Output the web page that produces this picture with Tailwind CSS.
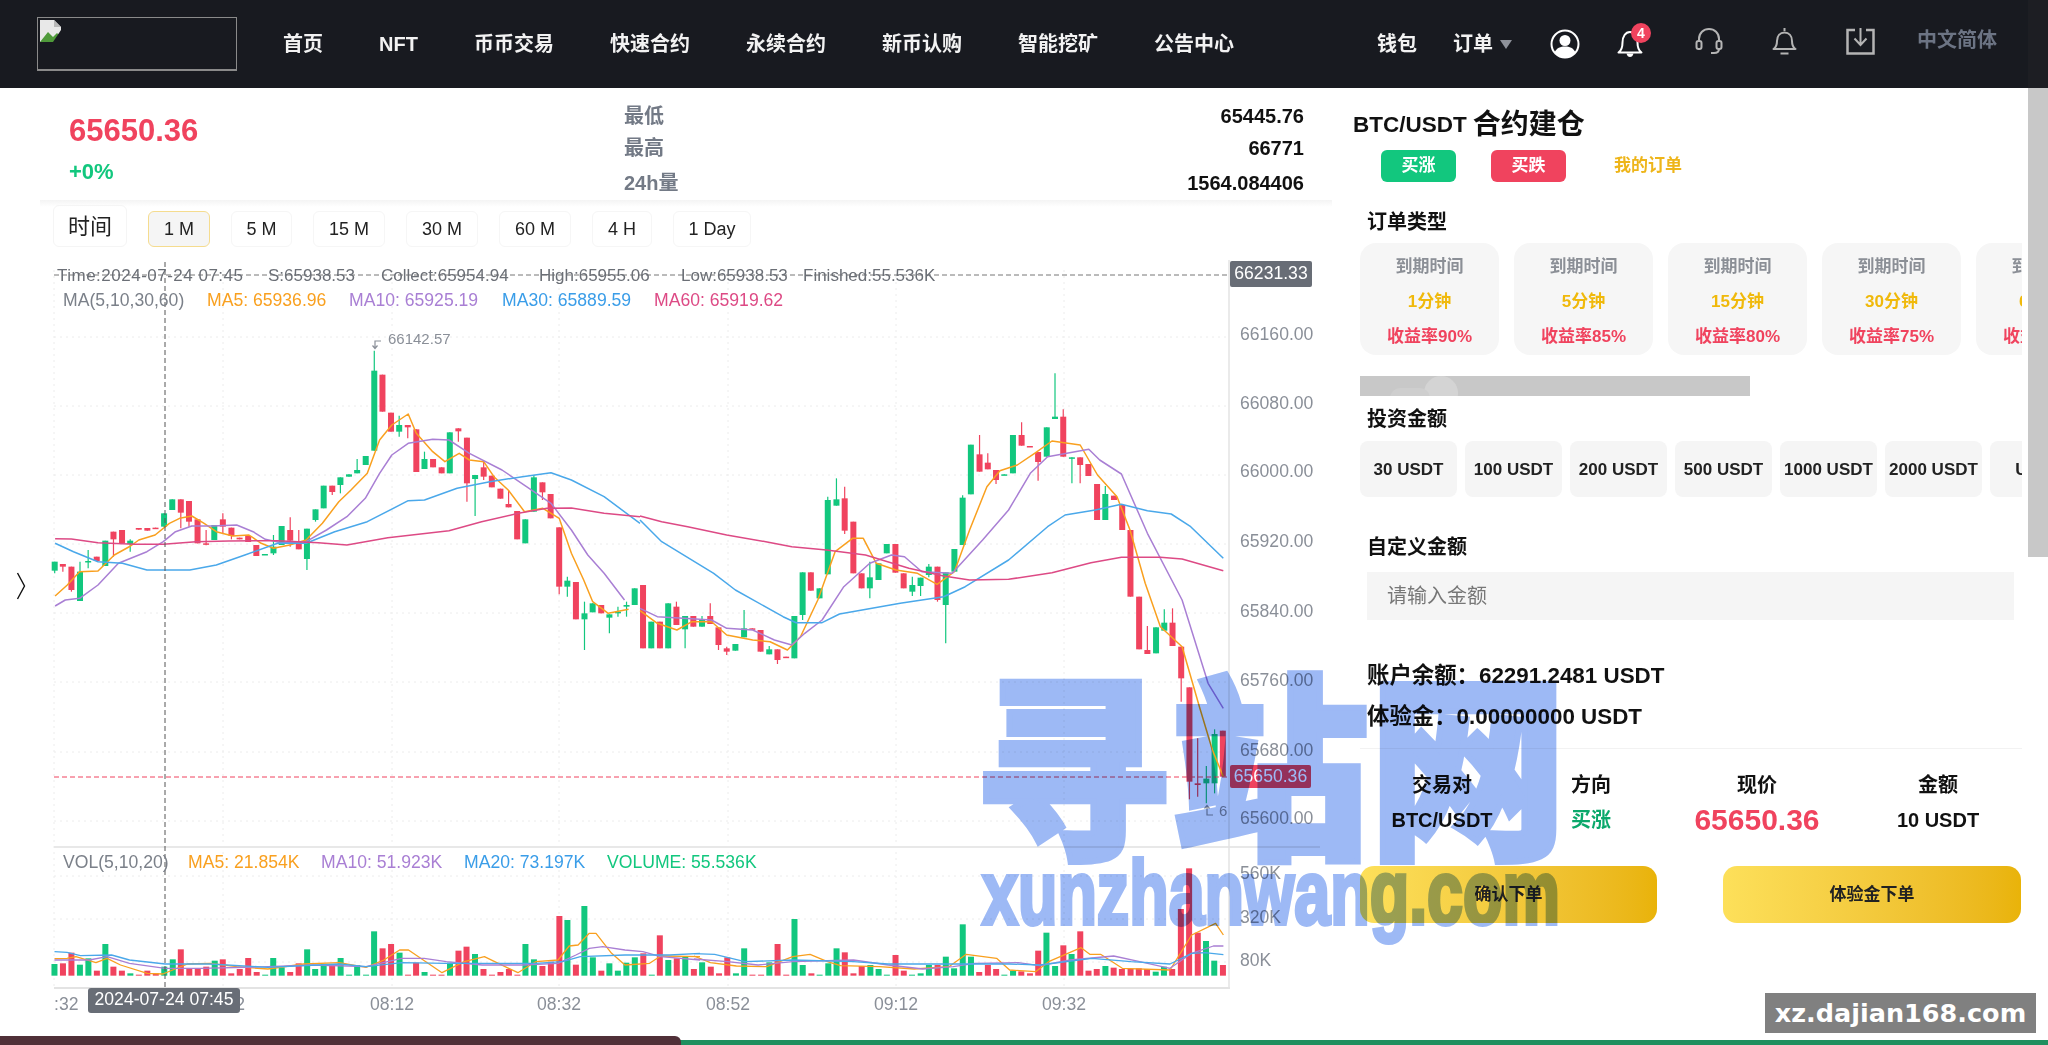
<!DOCTYPE html>
<html lang="zh-CN">
<head>
  <meta charset="UTF-8" />
  <title>BTC/USDT 合约建仓</title>
  <script src="https://cdn.jsdelivr.net/npm/@tailwindcss/browser@4"></script>
</head>
<body class="bg-white font-['Liberation_Sans','Noto_Sans_CJK_SC',sans-serif] text-[#111]">
<div class="relative flex h-[1045px] w-[2048px] overflow-hidden">

  <div class="w-[2028px] shrink-0">
    <!-- header -->
    <header class="flex h-[88px] items-center bg-[#181a20] pl-[37px] pr-[31px] text-[20px] font-bold text-[#f2f2f2]">
      <div class="h-[54px] w-[200px] border border-b-2 border-[#8a8a8a] pl-px pt-px">
        <svg width="23" height="24" viewBox="0 0 23 24">
          <path d="M1 1h14l7 7v15H1z" fill="#e8e8e8"/>
          <path d="M15 1v7h7z" fill="#b8b8b8"/>
          <path d="M1 23l8-10 5 5 4-4 4 4v5z" fill="#4f9a3a"/>
          <path d="M14 23l8-12v12z" fill="#181a20"/>
        </svg>
      </div>
      <nav class="ml-[46px] flex gap-14">
        <span>首页</span><span>NFT</span><span>币币交易</span><span>快速合约</span><span>永续合约</span><span>新币认购</span><span>智能挖矿</span><span>公告中心</span>
      </nav>
      <div class="ml-auto flex items-center">
        <span>钱包</span>
        <span class="ml-9">订单</span>
        <svg class="ml-[7px]" width="12" height="9" viewBox="0 0 12 9"><path d="M0 0h12L6 9z" fill="#8e929a"/></svg>
        <svg class="ml-[38px]" width="30" height="30" viewBox="0 0 30 30">
          <circle cx="15" cy="15" r="13.5" fill="none" stroke="#fff" stroke-width="2"/>
          <circle cx="15" cy="11.5" r="5.5" fill="#fff"/>
          <path d="M4.500 23.500c2-4.500 6-6 10.500-6s8.500 1.500 10.500 6c-2.500 3-6 5-10.500 5s-8-2-10.500-5z" fill="#fff"/>
        </svg>
        <div class="relative ml-[37px] h-[28px] w-[26px]">
          <svg width="26" height="28" viewBox="0 0 26 28">
            <path d="M1.500 22.500c3-2 4-5 4-10 0-6 3-10.500 7.500-10.500s7.500 4.500 7.500 10.500c0 5 1 8 4 10z" fill="none" stroke="#fff" stroke-width="2" stroke-linejoin="round"/>
            <path d="M9.500 23.500h7c-.5 2.500-2 3.500-3.500 3.500s-3-1-3.500-3.500z" fill="#fff"/>
          </svg>
          <span class="absolute -right-[8px] -top-[7px] flex h-5 w-5 items-center justify-center rounded-full bg-[#f0435e] text-[14px] leading-none text-white">4</span>
        </div>
        <svg class="ml-[52px] -translate-y-[3px]" width="28" height="28" viewBox="0 0 28 28" fill="none" stroke="#b4b4b4" stroke-width="2">
          <path d="M4 15V12C4 6 8.500 2 14 2s10 4 10 10v3"/>
          <rect x="1.500" y="14" width="5" height="8" rx="2"/>
          <rect x="21.500" y="14" width="5" height="8" rx="2"/>
          <path d="M24 22c0 3-2 4-5 4h-3"/>
        </svg>
        <svg class="ml-[49px] -translate-y-[3px]" width="25" height="28" viewBox="0 0 25 28" fill="none" stroke="#b4b4b4" stroke-width="2" stroke-linejoin="round">
          <path d="M1.500 22c2.500-1.500 3.500-4 3.500-8 0-5 3-8.500 7.500-8.500S20 9 20 14c0 4 1 6.500 3.500 8z"/>
          <path d="M12.500 1v3M8.500 26.500h8"/>
        </svg>
        <svg class="ml-[49px] -translate-y-[3px]" width="29" height="28" viewBox="0 0 29 28" fill="none" stroke="#b4b4b4" stroke-width="2.500">
          <path d="M9 3H1.500v23.500h26V3H20"/>
          <path d="M14.500 1v16M8.500 11.500l6 6.500 6-6.500" stroke-width="2"/>
        </svg>
        <span class="ml-[42px] -translate-y-[4px] text-[#6c7484]">中文简体</span>
      </div>
    </header>

    <div class="flex">
      <!-- chart side -->
      <section class="w-[1335px] shrink-0">
        <div class="flex h-[112px]">
          <div class="w-[624px] pl-[69px]">
            <div class="mt-[24px] text-[31px] leading-[38px] font-bold text-[#f0435e]">65650.36</div>
            <div class="mt-[8px] text-[22px] leading-7 font-bold text-[#12c77e]">+0%</div>
          </div>
          <div class="w-[680px] pt-[12px] text-[20px] font-bold">
            <div class="flex h-8 items-center justify-between"><span class="text-[#737a86]">最低</span><span>65445.76</span></div>
            <div class="flex h-8 items-center justify-between"><span class="text-[#737a86]">最高</span><span>66771</span></div>
            <div class="mt-[3px] flex h-8 items-center justify-between"><span class="text-[#737a86]">24h量</span><span>1564.084406</span></div>
          </div>
        </div>
        <div class="ml-10 h-[7px] w-[1292px] bg-gradient-to-b from-[#f4f4f4] to-white"></div>
        <div class="relative -mt-[2px] flex h-[45px] items-start pl-[53px] text-[18px] text-[#222]">
          <span class="flex h-[42px] w-[74px] items-center justify-center rounded-md border border-[#f5f5f5] text-[22px]">时间</span>
          <div class="ml-[21px] mt-[6px] flex gap-[21px]">
            <span class="flex h-[36px] w-[62px] items-center justify-center rounded-md border border-[#f5dc8f] bg-[#f5f5f5]">1 M</span>
            <span class="flex h-[36px] w-[61px] items-center justify-center rounded-md border border-[#f6f6f6]">5 M</span>
            <span class="flex h-[36px] w-[72px] items-center justify-center rounded-md border border-[#f6f6f6]">15 M</span>
            <span class="flex h-[36px] w-[72px] items-center justify-center rounded-md border border-[#f6f6f6]">30 M</span>
            <span class="flex h-[36px] w-[72px] items-center justify-center rounded-md border border-[#f6f6f6]">60 M</span>
            <span class="flex h-[36px] w-[60px] items-center justify-center rounded-md border border-[#f6f6f6]">4 H</span>
            <span class="flex h-[36px] w-[78px] items-center justify-center rounded-md border border-[#f6f6f6]">1 Day</span>
          </div>
        </div>
        <svg id="chart" class="block" width="1335" height="795" viewBox="0 250 1335 795"></svg>
      </section>

      <!-- order side -->
      <section class="w-[693px] overflow-hidden pl-[18px] pt-[17px]">
        <div class="flex h-10 items-center font-bold">
          <span class="text-[22.500px]">BTC/USDT</span>
          <span class="ml-[6px] text-[28px]">合约建仓</span>
        </div>
        <div class="ml-[28px] mt-[5px] flex h-8 items-center text-[17px] font-bold">
          <span class="flex h-8 w-[75px] items-center justify-center rounded-md bg-[#12c77e] text-white">买涨</span>
          <span class="ml-[35px] flex h-8 w-[75px] items-center justify-center rounded-md bg-[#f0435e] text-white">买跌</span>
          <span class="ml-[48px] text-[#eeb51a]">我的订单</span>
        </div>
        <div class="ml-[14px] mt-[25px] flex h-7 items-center pt-[2px] text-[20px] font-bold">订单类型</div>
        <div class="ml-[7px] mt-2 flex w-[662px] gap-[15px] overflow-hidden text-center text-[17px] font-bold">
          <div class="flex h-[112px] w-[139px] shrink-0 flex-col justify-center gap-[14px] rounded-2xl bg-[#f6f6f6] pt-[5px] leading-[21px]"><span class="text-[#8b8f96]">到期时间</span><span class="text-[#f0b90b]">1分钟</span><span class="text-[#f0435e]">收益率90%</span></div>
          <div class="flex h-[112px] w-[139px] shrink-0 flex-col justify-center gap-[14px] rounded-2xl bg-[#f6f6f6] pt-[5px] leading-[21px]"><span class="text-[#8b8f96]">到期时间</span><span class="text-[#f0b90b]">5分钟</span><span class="text-[#f0435e]">收益率85%</span></div>
          <div class="flex h-[112px] w-[139px] shrink-0 flex-col justify-center gap-[14px] rounded-2xl bg-[#f6f6f6] pt-[5px] leading-[21px]"><span class="text-[#8b8f96]">到期时间</span><span class="text-[#f0b90b]">15分钟</span><span class="text-[#f0435e]">收益率80%</span></div>
          <div class="flex h-[112px] w-[139px] shrink-0 flex-col justify-center gap-[14px] rounded-2xl bg-[#f6f6f6] pt-[5px] leading-[21px]"><span class="text-[#8b8f96]">到期时间</span><span class="text-[#f0b90b]">30分钟</span><span class="text-[#f0435e]">收益率75%</span></div>
          <div class="flex h-[112px] w-[139px] shrink-0 flex-col justify-center gap-[14px] rounded-2xl bg-[#f6f6f6] pt-[5px] leading-[21px]"><span class="text-[#8b8f96]">到期时间</span><span class="text-[#f0b90b]">60分钟</span><span class="text-[#f0435e]">收益率70%</span></div>
        </div>
        <div class="relative ml-[7px] mt-[21px] h-5 w-[390px] overflow-hidden bg-[#c8c8c8]">
          <span class="absolute left-[64px] top-0 h-[34px] w-[34px] rounded-full bg-[#d4d4d4]"></span>
          <span class="absolute left-[30px] top-[12px] h-5 w-[40px] rounded-full bg-[#cecece]"></span>
        </div>
        <div class="ml-[14px] mt-2 flex h-7 items-center pt-[2px] text-[20px] font-bold">投资金额</div>
        <div class="ml-[7px] mt-[9px] flex w-[662px] gap-2 overflow-hidden text-[17px] font-bold text-[#222]">
          <span class="flex h-14 w-[97px] shrink-0 items-center justify-center rounded-lg bg-[#f5f5f5] pt-[2px]">30 USDT</span>
          <span class="flex h-14 w-[97px] shrink-0 items-center justify-center rounded-lg bg-[#f5f5f5] pt-[2px]">100 USDT</span>
          <span class="flex h-14 w-[97px] shrink-0 items-center justify-center rounded-lg bg-[#f5f5f5] pt-[2px]">200 USDT</span>
          <span class="flex h-14 w-[97px] shrink-0 items-center justify-center rounded-lg bg-[#f5f5f5] pt-[2px]">500 USDT</span>
          <span class="flex h-14 w-[97px] shrink-0 items-center justify-center rounded-lg bg-[#f5f5f5] pt-[2px]">1000 USDT</span>
          <span class="flex h-14 w-[97px] shrink-0 items-center justify-center rounded-lg bg-[#f5f5f5] pt-[2px]">2000 USDT</span>
          <span class="flex h-14 w-[97px] shrink-0 items-center justify-center rounded-lg bg-[#f5f5f5] pt-[2px]">USDT</span>
        </div>
        <div class="ml-[14px] mt-[35px] flex h-7 items-center pt-[2px] text-[20px] font-bold">自定义金额</div>
        <div class="ml-[14px] mt-3 flex h-12 w-[647px] items-center bg-[#f5f5f5] pl-5 text-[20px] text-[#777]">请输入金额</div>
        <div class="ml-[14px] mt-[42px] flex h-7 items-center text-[22.400px] font-bold">账户余额：62291.2481 USDT</div>
        <div class="ml-[14px] mt-[13px] flex h-7 items-center text-[22.400px] font-bold">体验金：0.00000000 USDT</div>
        <div class="ml-[7px] mt-[17px] h-px w-[662px] bg-[#f2f2f2]"></div>
        <div class="ml-[7px] mt-[22px] grid w-[660px] grid-cols-[164px_134px_198px_164px] gap-y-[7px] text-center text-[20px] font-bold leading-7">
          <span>交易对</span><span>方向</span><span>现价</span><span>金额</span>
          <span>BTC/USDT</span><span class="text-[#0aa86b]">买涨</span><span class="text-[30px] text-[#f0435e]">65650.36</span><span>10 USDT</span>
        </div>
        <div class="ml-[7px] mt-[32px] flex w-[661px] justify-between text-[17px] font-bold text-[#222]">
          <span class="flex h-[57px] w-[297px] items-center justify-center rounded-[14px] bg-gradient-to-r from-[#fde05a] to-[#e9b308]">确认下单</span>
          <span class="flex h-[57px] w-[298px] items-center justify-center rounded-[14px] bg-gradient-to-r from-[#fde05a] to-[#e9b308]">体验金下单</span>
        </div>
      </section>
    </div>
  </div>

  <!-- page scrollbar -->
  <div class="w-5 shrink-0">
    <div class="h-[88px] bg-[#1d1e23]"></div>
    <div class="h-[469px] bg-[#c8c8c8]"></div>
  </div>

  <!-- bottom strip -->
  <div class="absolute bottom-0 left-0 h-[5px] w-full bg-[#1f8f5f]"></div>
  <div class="absolute bottom-0 left-0 h-[9px] w-[681px] rounded-tr-md bg-[#503038]"></div>

  <!-- watermarks over the page -->
  <div class="pointer-events-none absolute left-[973px] top-[676px] text-[198px] leading-[1] font-black whitespace-nowrap text-[#9db9f5] mix-blend-multiply [-webkit-text-stroke:6px_#9db9f5]">寻站网</div>
  <div class="pointer-events-none absolute left-[982px] top-[847px] origin-left scale-x-[0.71] text-[91px] leading-[1] font-bold whitespace-nowrap text-[#9db9f5] mix-blend-multiply [-webkit-text-stroke:4px_#9db9f5]">xunzhanwang.com</div>
  <div class="absolute left-[1765px] top-[993px] flex h-10 w-[271px] items-center justify-center bg-[#808080] font-['DejaVu_Sans',sans-serif] text-[25.500px] font-bold text-white">xz.dajian168.com</div>
</div>

<script>
  const GREEN = "#12c77e", RED = "#f0435e";

  // candles read off the picture: [x, bodyTop, bodyBottom, wickTop, wickBottom], g / r
  const left = [
    ["g",134,905,932,905,940],["r",154,912,920,912,935],["r",175,920,990,920,995],["g",196,935,1023,905,1023],["g",216,903,906,870,925],
    ["r",237,890,903,890,903],["g",258,842,918,842,918],["r",278,815,838,815,890],["r",299,810,850,810,850],["g",319,842,852,838,875],
    ["r",340,804,809,804,809],["r",361,804,812,804,812],["r",381,803,805,803,805],["g",402,760,800,760,800],["g",422,718,750,718,750],
    ["r",443,718,758,718,805],["r",463,723,785,723,800],["r",484,778,850,778,850],["r",505,850,854,810,856],["g",525,795,840,795,840],
    ["r",546,778,800,760,820],["r",567,803,828,803,838],["r",587,833,838,833,838],["r",608,828,846,828,846],["r",628,855,888,855,888],
    ["g",649,882,885,882,885],["g",670,860,880,825,885],["g",690,798,855,798,855],["r",711,810,842,772,860],["r",732,843,868,810,868],
    ["g",752,806,897,806,930],["g",773,748,780,748,785],["g",793,677,745,677,745],["r",814,677,696,677,705],["g",834,652,675,652,700],
    ["g",855,643,650,643,650],["g",875,630,640,597,640],["g",896,588,615,588,615],["g",917,332,572,272,572],["r",937,344,455,344,455],
    ["r",958,458,515,458,515],["g",978,495,515,467,530],["r",999,495,502,495,535],["r",1020,508,636,508,636],["g",1040,597,627,575,627],
    ["r",1061,597,622,597,622],["r",1082,622,640,622,640],["g",1102,517,640,517,640],["r",1123,505,514,505,545],["r",1144,533,670,533,725],
    ["g",1164,645,657,645,768],["r",1185,622,650,605,660],["r",1205,647,682,647,682],["r",1226,686,716,686,716],["r",1246,732,742,690,742],
    ["r",1267,753,838,753,838],["g",1287,778,850,778,850],["g",1308,652,755,645,755],["r",1329,667,697,667,720],["r",1349,702,775,702,775],
    ["r",1370,802,980,802,1003],["g",1390,962,980,950,1010],["r",1411,966,1078,966,1078],["g",1432,1060,1078,1025,1170],["g",1452,1030,1057,1030,1057],
    ["r",1473,1035,1060,1035,1060],["g",1493,1063,1073,1063,1120],["g",1514,1055,1060,1040,1070],["g",1535,1035,1040,1025,1070],["g",1555,985,1035,985,1035]
  ];
  const right = [
    ["r",7,735,925,735,925],["g",26,845,925,845,925],["r",46,845,925,845,925],["g",65,790,925,790,925],["r",84,800,855,785,855],
    ["g",104,828,868,828,925],["r",123,828,860,828,860],["g",143,838,860,828,860],["r",162,828,852,790,852],["r",181,862,915,862,930],
    ["r",200,925,935,920,945],["g",220,912,932,912,932],["g",240,865,892,810,892],["r",259,865,868,865,868],["r",278,870,935,870,935],
    ["g",298,928,943,918,943],["r",317,928,960,928,972],["r",337,950,954,950,954],["g",356,828,955,828,955],["g",375,697,825,697,840],
    ["r",394,697,752,697,752],["g",414,745,775,745,775],["g",433,480,703,470,703],["g",453,478,497,415,497],["r",472,475,572,440,582],
    ["r",492,545,700,545,700],["r",511,700,745,700,745],["g",530,712,745,665,775],["g",550,670,720,670,720],["g",569,612,640,612,640],
    ["r",589,612,698,612,698],["r",608,700,745,700,745],["g",628,735,755,710,768],["g",647,713,738,713,768],["g",666,680,705,672,712],
    ["r",686,680,780,680,785],["g",705,697,795,697,910],["g",725,627,695,627,695],["g",744,473,615,466,615],["g",763,314,463,314,463],
    ["r",783,343,395,285,395],["r",802,368,388,340,388],["r",821,390,420,390,432],["g",840,403,405,403,405],["g",860,285,400,285,400],
    ["r",880,285,317,247,317],["r",899,318,321,318,321],["r",918,336,366,336,422],["g",938,262,350,262,350],["g",957,230,237,100,237],
    ["r",976,230,350,208,350],["g",996,352,355,352,430],["r",1015,352,375,352,430],["r",1034,372,408,372,408],["r",1054,432,540,432,540],
    ["g",1073,462,540,438,540],["r",1093,467,480,467,480],["r",1112,495,570,495,570],["r",1131,570,770,570,770],["r",1151,770,928,770,928],
    ["r",1170,930,942,858,942],["g",1190,862,940,862,940],["g",1209,848,872,808,872],["r",1228,848,918,805,918],["r",1248,920,1015,920,1085],
    ["r",1267,1042,1325,1042,1378],["r",1286,1330,1335,1195,1370],["g",1306,1316,1330,1278,1390],["g",1325,1182,1330,1168,1360],["r",1344,1172,1310,1172,1310]
  ];

  // moving averages, two crops each
  const mainLines = [
    ["#f9a01f",
      [135,1008,165,975,195,935,240,933,280,885,320,858,340,840,380,825,415,790,440,775,470,768,500,790,530,815,570,828,610,825,640,850,670,865,710,855,750,840,790,790,830,725,860,690,900,640,930,540,960,495,1000,462,1020,520,1060,575,1090,605,1125,580,1150,600,1185,605,1210,650,1245,690,1285,755,1330,745,1370,775,1400,880,1430,960,1452,1025,1490,1060,1540,1048],
      [0,812,40,850,85,870,120,845,165,845,200,885,260,900,300,905,340,930,370,890,410,780,450,635,490,595,515,595,545,670,590,690,640,700,685,733,725,695,760,570,800,440,830,392,870,375,910,340,950,303,1015,315,1055,405,1100,470,1130,570,1165,730,1200,860,1250,920,1290,1100,1320,1230,1345,1310]],
    ["#a97fd4",
      [135,1038,160,1020,195,1015,240,975,290,910,360,875,400,845,430,815,470,798,520,798,580,795,620,815,650,838,690,848,750,845,800,810,850,770,895,715,930,640,960,585,1000,550,1060,538,1100,540,1150,580,1230,630,1290,680,1350,730,1400,810,1440,885,1480,940,1530,1020],
      [0,805,40,830,100,835,165,840,200,865,260,870,310,900,350,915,380,880,420,840,470,740,530,670,580,645,610,650,650,695,720,700,790,600,850,510,900,400,940,350,1035,328,1060,360,1110,402,1170,580,1250,780,1310,1030,1345,1105]],
    ["#4aa8ea",
      [135,850,180,875,240,905,300,910,360,930,465,930,530,915,600,885,680,850,750,850,820,815,900,785,1000,722,1040,720,1120,685,1200,665,1280,650,1350,638,1400,660,1480,710,1568,790],
      [0,540,50,605,170,700,220,750,330,830,360,848,420,848,460,822,600,790,700,770,750,740,850,660,940,560,980,525,1050,510,1110,493,1170,512,1225,522,1270,560,1345,655]],
    ["#dd4a85",
      [135,836,175,837,240,848,330,853,400,853,480,845,560,843,680,842,780,848,850,855,950,833,1100,812,1180,785,1270,760,1340,745,1400,744,1480,760,1568,770],
      [0,528,50,545,110,560,200,585,290,605,350,620,430,630,520,645,620,685,700,708,760,720,850,718,950,698,1040,668,1110,652,1200,652,1250,657,1345,692]]
  ];

  const leftX = x => x / 2.45, rightX = x => 640 + x / 2.306;
  const leftY = y => 260 + y / 3, rightY = y => 340 + y / 3;

  let svg = "";
  const gridH = [337, 406, 475, 544, 613, 682, 752, 821, 876, 919, 962];
  const gridV = [54, 223, 392, 559, 728, 896, 1064];
  gridH.forEach(y => svg += `<line x1="54" x2="1229" y1="${y}" y2="${y}" stroke="#ececec" stroke-dasharray="2 4"/>`);
  gridV.forEach(x => svg += `<line x1="${x}" x2="${x}" y1="270" y2="988" stroke="#ececec" stroke-dasharray="2 4"/>`);

  function candle(c, fx, fy) {
    const color = c[0] === "g" ? GREEN : RED, x = fx(c[1]);
    svg += `<line x1="${x}" x2="${x}" y1="${fy(c[4])}" y2="${fy(c[5])}" stroke="${color}" stroke-width="1.2"/>`;
    svg += `<rect x="${x - 3}" y="${fy(c[2])}" width="6" height="${Math.max(1.5, (c[3] - c[2]) / 3)}" fill="${color}"/>`;
  }
  left.forEach(c => candle(c, leftX, leftY));
  right.forEach(c => candle(c, rightX, rightY));

  function line(color, pts, fx, fy, w) {
    let p = "";
    for (let i = 0; i < pts.length; i += 2) p += fx(pts[i]).toFixed(1) + "," + fy(pts[i + 1]).toFixed(1) + " ";
    svg += `<polyline points="${p}" fill="none" stroke="${color}" stroke-width="${w}" stroke-linejoin="round"/>`;
  }
  mainLines.forEach(l => {
    line(l[0], l[1], leftX, leftY, 1.5);
    line(l[0], l[2], rightX, rightY, 1.5);
  });

  // volume bars
  const vol1 = [["g",122,432],["r",141,430],["r",160,398],["g",179,434],["g",198,415],["r",217,452],["g",236,372],["r",254,440],["r",273,452],["g",292,460],["r",311,464],["r",330,452],["r",349,460],["g",368,440],["g",387,418],["r",405,388],["r",424,445],["r",443,447],["r",462,440],["g",481,422],["r",499,418],["r",518,460],["r",537,447],["r",556,414],["r",575,456],["g",594,464],["g",612,414],["g",631,442],["r",650,456],["r",669,430],["g",688,388],["g",706,447],["g",725,432],["r",744,432],["g",763,414],["g",782,464],["g",800,435],["g",820,464],["g",838,334],["r",857,385],["r",876,372],["g",895,398],["r",914,464],["r",932,428],["g",951,456],["r",970,464],["r",989,464],["g",1008,428],["r",1027,392],["r",1045,380],["g",1064,402],["r",1083,447],["r",1102,464],["r",1121,456],["r",1140,447],["r",1159,464],["g",1177,372],["g",1196,418],["r",1215,438],["r",1234,425],["r",1253,288],["g",1271,300],["r",1290,434],["g",1309,258],["g",1328,412],["r",1347,452],["g",1365,430],["g",1384,452],["g",1403,428],["g",1422,412],["r",1441,400],["g",1460,464],["r",1478,346],["g",1497,420],["r",1516,415],["g",1535,408]];
  const vol2 = [["r",32,447],["g",51,427],["r",71,440],["r",90,460],["r",109,412],["g",129,460],["g",148,385],["r",167,464],["r",187,464],["g",206,427],["r",225,372],["r",245,464],["g",264,297],["g",283,435],["r",303,460],["g",322,464],["g",342,430],["g",361,385],["r",380,397],["r",400,460],["r",419,438],["g",439,435],["g",458,447],["g",477,464],["r",497,405],["r",516,452],["g",535,464],["g",555,460],["g",574,435],["r",594,435],["g",613,410],["g",632,445],["g",652,313],["g",671,410],["r",690,456],["r",710,435],["r",729,447],["g",748,464],["g",768,452],["r",787,454],["r",807,460],["r",826,392],["g",845,338],["g",865,438],["r",884,376],["g",903,402],["r",923,334],["r",942,452],["r",961,447],["g",981,438],["r",1000,443],["r",1019,447],["r",1039,447],["r",1058,445],["r",1077,447],["g",1097,455],["g",1116,440],["r",1135,447],["r",1155,267],["r",1174,145],["r",1194,338],["g",1213,363],["g",1232,422],["r",1252,435]];
  const volX1 = x => x / 2.24, volX2 = x => 680 + x / 2.306, volY = y => 820 + y / 3;
  const bar = (b, fx) => svg += `<rect x="${fx(b[1]) - 3}" y="${volY(b[2])}" width="6" height="${(467 - b[2]) / 3}" fill="${b[0] === "g" ? GREEN : RED}"/>`;
  vol1.forEach(b => bar(b, volX1));
  vol2.forEach(b => bar(b, volX2));

  const volLines = [
    ["#f9a01f",
      [122,416,150,415,170,410,215,428,240,415,270,435,330,460,365,462,420,432,470,430,530,440,600,447,680,432,760,428,820,442,860,420,895,390,915,390,990,458,1040,425,1085,410,1160,458,1200,425,1250,420,1275,378,1295,375,1320,340,1335,340,1370,400,1400,435,1455,430,1480,408,1568,410],
      [32,408,70,428,130,438,200,440,260,410,300,403,340,425,370,437,460,440,540,447,620,440,660,403,730,415,760,450,820,455,850,425,925,383,945,403,970,403,1020,445,1130,450,1180,345,1235,310,1253,345]],
    ["#a97fd4",
      [122,420,200,420,240,410,290,430,370,445,450,445,600,440,700,435,820,440,900,415,950,415,1000,425,1080,435,1170,435,1250,430,1290,405,1320,385,1350,380,1400,390,1440,395,1480,410,1568,420],
      [32,417,110,425,180,435,260,425,400,420,480,435,560,447,630,440,680,430,780,428,830,437,900,420,1000,408,1060,425,1130,445,1180,400,1230,378,1253,378]],
    ["#4aa8ea",
      [122,395,150,397,180,407,250,405,290,420,370,432,470,432,600,442,760,432,820,440,900,428,1000,430,1200,430,1260,425,1300,410,1400,405,1500,405,1568,400],
      [32,401,80,403,150,425,260,420,400,425,480,432,620,432,760,432,830,435,950,415,1040,425,1130,432,1180,400,1210,398,1253,404]]
  ];
  volLines.forEach(l => {
    line(l[0], l[1], volX1, volY, 1.3);
    line(l[0], l[2], volX2, volY, 1.3);
  });

  // axes
  svg += `<line x1="54" x2="1320" y1="847" y2="847" stroke="#e8e8e8" stroke-width="2"/>`;
  svg += `<line x1="54" x2="1230" y1="988" y2="988" stroke="#e3e3e3" stroke-width="2"/>`;
  svg += `<line x1="1229" x2="1229" y1="260" y2="988" stroke="#e3e3e3" stroke-width="1.5"/>`;

  const text = (x, y, s, color, anchor) => svg += `<text x="${x}" y="${y}" font-size="17.600" fill="${color}" text-anchor="${anchor || "start"}" dominant-baseline="central">${s}</text>`;
  [["66160.00",334],["66080.00",403],["66000.00",471],["65920.00",541],["65840.00",611],["65760.00",680],["65680.00",750],["65600.00",818],["560K",873],["320K",917],["80K",960]]
    .forEach(a => text(1240, a[1], a[0], "#8a8f98"));
  text(54, 1004, ":32", "#8a8f98");
  [["07:52",223],["08:12",392],["08:32",559],["08:52",728],["09:12",896],["09:32",1064]].forEach(a => text(a[1], 1004, a[0], "#8a8f98", "middle"));

  // crosshair
  svg += `<line x1="165" x2="165" y1="262" y2="988" stroke="#555" stroke-dasharray="5 3"/>`;
  svg += `<line x1="54" x2="1230" y1="275" y2="275" stroke="#777" stroke-dasharray="5 3"/>`;
  svg += `<text x="57" y="275" font-size="17" textLength="186" fill="#6b6f76" dominant-baseline="central">Time:2024-07-24 07:45</text>`;
  [["S:65938.53",268],["Collect:65954.94",381],["High:65955.06",539],["Low:65938.53",681],["Finished:55.536K",803]]
    .forEach(a => svg += `<text x="${a[1]}" y="275" font-size="17" fill="#6b6f76" dominant-baseline="central">${a[0]}</text>`);
  [["MA(5,10,30,60)",63,"#7b8089"],["MA5: 65936.96",207,"#f9a01f"],["MA10: 65925.19",349,"#a97fd4"],["MA30: 65889.59",502,"#3a9de8"],["MA60: 65919.62",654,"#dd4a85"]]
    .forEach(a => text(a[1], 300, a[0], a[2]));
  [["VOL(5,10,20)",63,"#7b8089"],["MA5: 21.854K",188,"#f9a01f"],["MA10: 51.923K",321,"#a97fd4"],["MA20: 73.197K",464,"#3a9de8"],["VOLUME: 55.536K",607,"#12c77e"]]
    .forEach(a => text(a[1], 862, a[0], a[2]));

  // high / low markers
  svg += `<path d="M381 341h-6v7m-2.500-2.500l2.500 3 2.500-3" fill="none" stroke="#8a8f98" stroke-width="1.2"/>`;
  svg += `<text x="388" y="338" font-size="15" fill="#8a8f98" dominant-baseline="central">66142.57</text>`;
  svg += `<path d="M1207 806v9h6m-8.500-6.500l2.500-3 2.500 3" fill="none" stroke="#8a8f98" stroke-width="1.2"/>`;
  svg += `<text x="1219" y="810" font-size="15" fill="#8a8f98" dominant-baseline="central">6</text>`;

  // price line and tags
  svg += `<line x1="54" x2="1230" y1="777" y2="777" stroke="${RED}" stroke-dasharray="5 3"/>`;
  svg += `<rect x="1230" y="261" width="82" height="26" rx="2" fill="#686d76"/>`;
  svg += `<text x="1271" y="273" font-size="17.600" fill="#fff" text-anchor="middle" dominant-baseline="central">66231.33</text>`;
  svg += `<rect x="1230" y="765" width="81" height="23" rx="2" fill="${RED}"/>`;
  svg += `<text x="1270.500" y="776" font-size="17.600" fill="#fff" text-anchor="middle" dominant-baseline="central">65650.36</text>`;
  svg += `<rect x="88" y="988" width="152" height="25" rx="3" fill="#686d76"/>`;
  svg += `<text x="164" y="999" font-size="17.600" fill="#fff" text-anchor="middle" dominant-baseline="central">2024-07-24 07:45</text>`;

  // side chevron
  svg += `<path d="M17.500 573l7 13-7 13" fill="none" stroke="#111" stroke-width="1.4"/>`;

  document.getElementById("chart").innerHTML = svg;
</script>
</body>
</html>
